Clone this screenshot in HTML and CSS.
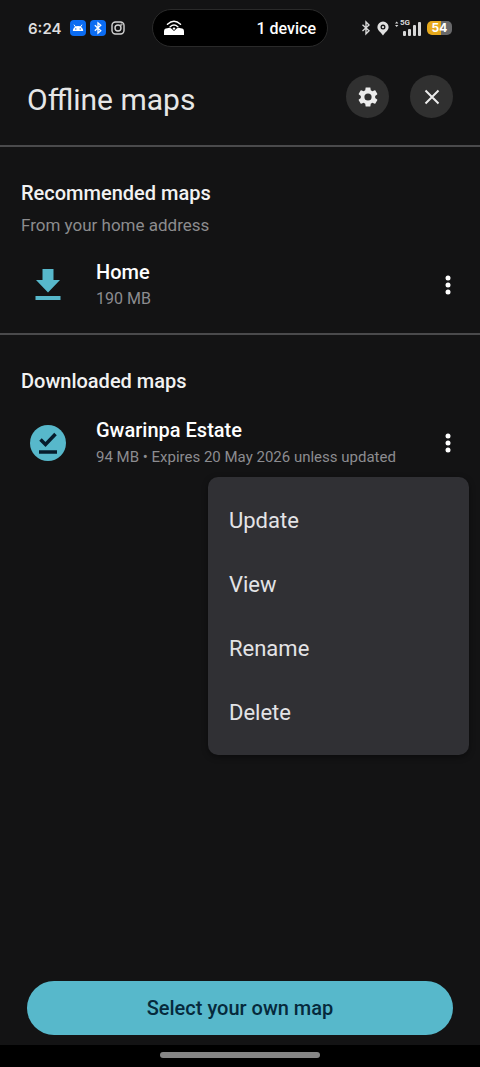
FILE: index.html
```html
<!DOCTYPE html>
<html lang="en">
<head>
<meta charset="utf-8">
<meta name="viewport" content="width=device-width, initial-scale=1">
<title>Offline maps</title>
<link rel="stylesheet" href="styles.css">
</head>
<body>
<div class="status-bar">
  <div class="status-left">
    <span class="clock">6:24</span>
    <svg class="app-icon" viewBox="0 0 16 16" aria-hidden="true"><rect width="16" height="16" rx="4" fill="#0b6cf2"/><path d="M2.800 11a5.200 5 0 0 1 10.400 0z" fill="#fff"/><path d="M4.200 5l1.400 2M11.800 5l-1.400 2" stroke="#fff" stroke-linecap="round"/><circle cx="5.800" cy="9" r=".7" fill="#0b6cf2"/><circle cx="10.200" cy="9" r=".7" fill="#0b6cf2"/></svg>
    <svg class="app-icon" viewBox="0 0 16 16" aria-hidden="true"><rect width="16" height="16" rx="4" fill="#0b6cf2"/><path d="M4.800 5.200l6 5.600L8 13.200V2.800l2.800 2.400-6 5.600" fill="none" stroke="#fff" stroke-width="1.300"/></svg>
    <svg class="app-icon" viewBox="0 0 16 16" fill="none" stroke="#d4d4d4" stroke-width="1.400" aria-hidden="true"><rect x="2" y="2" width="12" height="12" rx="3.500"/><circle cx="8" cy="8" r="3"/><circle cx="11.500" cy="4.600" r=".4"/></svg>
  </div>
  <div class="island">
    <svg class="hotspot" viewBox="0 0 20 16" aria-hidden="true"><path d="M0 15v-3.500q0-3.200 3.300-3.200 2.100-1 4 .2L10 11l2.700-2.500q1.900-1.200 4-.2 3.300 0 3.300 3.200V15z" fill="#fff"/><path d="M3.500 4.200q6.500-5.800 13 0M6.200 6.700q3.800-3.400 7.600 0" fill="none" stroke="#fff" stroke-width="1.500" stroke-linecap="round"/><circle cx="10" cy="8.600" r="1.200" fill="#fff"/></svg>
    <span>1 device</span>
  </div>
  <div class="status-right">
    <svg class="bluetooth" viewBox="0 0 10 16" fill="none" stroke="#d8d8d8" stroke-width="1.400" aria-hidden="true"><path d="M1.500 4.700l6.500 6-3 3V2l3 3-6.500 6"/></svg>
    <svg class="pin" viewBox="0 0 12 15" aria-hidden="true"><path fill-rule="evenodd" d="M6 .5a5.600 5.600 0 0 1 5.600 5.600C11.600 9.500 8.500 11 6 14.500 3.500 11 .4 9.500.4 6.100A5.600 5.600 0 0 1 6 .5zm0 3.100a2.500 2.500 0 1 0 0 5 2.500 2.500 0 0 0 0-5z" fill="#e0e0e0"/><circle cx="6" cy="6.100" r="1.200" fill="#e0e0e0"/></svg>
    <div class="signal">
      <span class="network">5G</span>
      <svg class="bars" viewBox="0 0 26 15" fill="#d8d8d8" aria-hidden="true"><path d="M0 2.500L1.700.5l1.700 2zM0 4h3.400L1.700 6z"/><rect x="8" y="10" width="3" height="5" rx="1"/><rect x="13" y="8" width="3" height="7" rx="1"/><rect x="18" y="4" width="3" height="11" rx="1"/><rect x="23" y="1" width="3" height="14" rx="1"/></svg>
    </div>
    <span class="battery">54</span>
  </div>
</div>

<header class="header">
  <h1 class="title">Offline maps</h1>
  <div class="header-actions">
    <button class="round-button" type="button" aria-label="Settings">
      <svg class="icon" viewBox="0 0 24 24" fill="#ececec" aria-hidden="true"><path d="M19.140 12.940c.04-.3.060-.61.060-.94 0-.32-.02-.64-.07-.94l2.030-1.580c.18-.14.230-.41.120-.61l-1.920-3.320c-.12-.22-.37-.29-.59-.22l-2.390.96c-.5-.38-1.030-.7-1.620-.94l-.36-2.540c-.04-.24-.24-.41-.48-.41h-3.840c-.24 0-.43.170-.47.410l-.36 2.540c-.59.240-1.130.570-1.620.94l-2.390-.96c-.22-.08-.47 0-.59.220L2.740 8.870c-.12.210-.08.470.12.610l2.030 1.580c-.05.300-.09.630-.09.940s.02.640.07.940l-2.030 1.580c-.18.140-.23.410-.12.610l1.920 3.320c.12.220.37.290.59.220l2.390-.96c.5.380 1.030.7 1.620.94l.36 2.540c.05.240.24.410.48.410h3.840c.24 0 .44-.17.470-.41l.36-2.540c.59-.24 1.130-.56 1.620-.94l2.390.96c.22.080.47 0 .59-.22l1.920-3.320c.12-.22.070-.47-.12-.61l-2.010-1.580zM12 15.600a3.600 3.600 0 1 1 0-7.200 3.600 3.600 0 0 1 0 7.200z"/></svg>
    </button>
    <button class="round-button" type="button" aria-label="Close">
      <svg class="icon" viewBox="0 0 24 24" fill="none" stroke="#ececec" stroke-width="2" aria-hidden="true"><path d="M5.500 5.500l13 13M18.500 5.500l-13 13"/></svg>
    </button>
  </div>
</header>

<main class="content">
  <section class="section">
    <h2 class="section-title">Recommended maps</h2>
    <p class="section-note">From your home address</p>
    <div class="map-row">
      <svg class="map-icon" viewBox="0 0 36 36" fill="#57b8cb" aria-hidden="true"><path d="M12.500 2h11v11H30L18 25.500 6 13h6.500zM5.500 29h25v4h-25z"/></svg>
      <div class="map-text">
        <h3 class="map-name">Home</h3>
        <p class="map-detail">190 MB</p>
      </div>
      <button class="more" type="button" aria-label="Options for Home"><svg class="dots" viewBox="0 0 6 20" fill="#fff" aria-hidden="true"><circle cx="3" cy="3" r="2.500"/><circle cx="3" cy="10" r="2.500"/><circle cx="3" cy="17" r="2.500"/></svg></button>
    </div>
  </section>
  <section class="section">
    <h2 class="section-title">Downloaded maps</h2>
    <div class="map-row">
      <svg class="map-icon" viewBox="0 0 36 36" aria-hidden="true"><circle cx="18" cy="18" r="18" fill="#57b8cb"/><path d="M10.500 14.500l5 5L25.500 9M9 27h18" fill="none" stroke="#061c2c" stroke-width="3.500"/></svg>
      <div class="map-text">
        <h3 class="map-name">Gwarinpa Estate</h3>
        <p class="map-detail map-detail-long">94 MB • Expires 20 May 2026 unless updated</p>
      </div>
      <button class="more" type="button" aria-label="Options for Gwarinpa Estate" aria-expanded="true"><svg class="dots" viewBox="0 0 6 20" fill="#fff" aria-hidden="true"><circle cx="3" cy="3" r="2.500"/><circle cx="3" cy="10" r="2.500"/><circle cx="3" cy="17" r="2.500"/></svg></button>
      <div class="menu" role="menu">
        <button class="menu-item" type="button" role="menuitem">Update</button>
        <button class="menu-item" type="button" role="menuitem">View</button>
        <button class="menu-item" type="button" role="menuitem">Rename</button>
        <button class="menu-item" type="button" role="menuitem">Delete</button>
      </div>
    </div>
  </section>
</main>

<footer class="footer">
  <button class="select-map" type="button">Select your own map</button>
</footer>
<div class="nav-bar"><span class="nav-handle"></span></div>
</body>
</html>
```

FILE: styles.css
```css
* {
  box-sizing: border-box;
}

body {
  display: flex;
  flex-direction: column;
  min-height: 100vh;
  margin: 0;
  background: #131314;
  color: #f2f2f2;
  font-family: Roboto, "Noto Sans", sans-serif;
}

h1, h2, h3, p {
  margin: 0;
}

button {
  border: 0;
  padding: 0;
  font: inherit;
  color: inherit;
  background: none;
  cursor: pointer;
}

svg {
  display: block;
  flex: none;
}

.status-bar {
  display: grid;
  grid-template-columns: 1fr 176px 1fr;
  align-items: center;
  height: 56px;
  padding: 0 28px;
}

.status-left {
  display: flex;
  align-items: center;
  gap: 4px;
}

.clock {
  margin-right: 5px;
  color: #dedede;
  font-family: Inter, sans-serif;
  font-size: 15px;
  font-weight: 600;
}

.app-icon {
  width: 16px;
  height: 16px;
}

.island {
  display: flex;
  align-items: center;
  justify-content: space-between;
  height: 38px;
  padding: 0 11px;
  border: 1px solid #2a2a2a;
  border-radius: 19px;
  background: #000;
  color: #fff;
  font-size: 16px;
  font-weight: 500;
}

.hotspot {
  width: 20px;
  height: 16px;
}

.status-right {
  display: flex;
  align-items: center;
  justify-content: flex-end;
  gap: 6px;
}

.bluetooth {
  width: 10px;
  height: 16px;
}

.pin {
  width: 12px;
  height: 15px;
}

.signal {
  position: relative;
}

.network {
  position: absolute;
  top: -2px;
  left: 5px;
  color: #d8d8d8;
  font-size: 8px;
  font-weight: 700;
  line-height: 8px;
}

.bars {
  width: 26px;
  height: 15px;
}

.battery {
  width: 25px;
  border-radius: 5px;
  background: linear-gradient(90deg, #e6a91c 54%, #68686a 54%);
  color: #fff;
  font-family: Inter, sans-serif;
  font-size: 12px;
  font-weight: 700;
  line-height: 14px;
  text-align: center;
}

.header {
  display: flex;
  align-items: center;
  justify-content: space-between;
  height: 91px;
  padding: 0 27px 8px;
  border-bottom: 2px solid #4a4a4c;
}

.title {
  padding-top: 6px;
  color: #e6e6e6;
  font-size: 30px;
  font-weight: 400;
  line-height: 40px;
}

.header-actions {
  display: flex;
  gap: 21px;
}

.round-button {
  display: grid;
  place-items: center;
  width: 43px;
  height: 43px;
  border-radius: 50%;
  background: #303030;
}

.icon {
  width: 24px;
  height: 24px;
}

.content {
  flex: 1;
}

.section {
  padding: 32px 21px 21px;
}

.section + .section {
  border-top: 2px solid #4a4a4c;
}

.section-title {
  font-size: 20px;
  font-weight: 500;
  line-height: 28px;
}

.section-note {
  margin-top: 6px;
  color: #8c8c8e;
  font-size: 17px;
  line-height: 24px;
}

.map-row {
  position: relative;
  display: flex;
  align-items: center;
  gap: 30px;
  padding: 21px 0 0 9px;
}

.map-icon {
  width: 36px;
  height: 36px;
}

.map-text {
  flex: 1;
  min-width: 0;
}

.map-name {
  color: #fff;
  font-size: 20px;
  font-weight: 500;
  line-height: 28px;
}

.map-detail {
  color: #8c8c90;
  font-size: 16px;
  line-height: 26px;
}

.map-detail-long {
  font-size: 15px;
}

.more {
  display: grid;
  place-items: center;
  width: 24px;
  height: 48px;
  margin-right: -1px;
}

.dots {
  width: 6px;
  height: 20px;
}

.menu {
  position: absolute;
  top: calc(100% + 7px);
  right: -10px;
  z-index: 1;
  width: 261px;
  padding: 11px 0;
  border-radius: 10px;
  background: #303034;
  box-shadow: 0 2px 6px rgba(0, 0, 0, 0.4);
}

.menu-item {
  display: block;
  width: 100%;
  height: 64px;
  padding: 0 21px;
  color: #e3e3e6;
  font-size: 22px;
  text-align: left;
}

.footer {
  padding: 0 27px 10px;
}

.select-map {
  width: 100%;
  height: 54px;
  border-radius: 27px;
  background: #57b8cb;
  color: #062a3c;
  font-size: 20px;
  font-weight: 500;
}

.nav-bar {
  display: grid;
  place-items: center;
  height: 22px;
  padding-bottom: 3px;
  background: #000;
}

.nav-handle {
  width: 160px;
  height: 6px;
  border-radius: 3px;
  background: #858585;
}
```
